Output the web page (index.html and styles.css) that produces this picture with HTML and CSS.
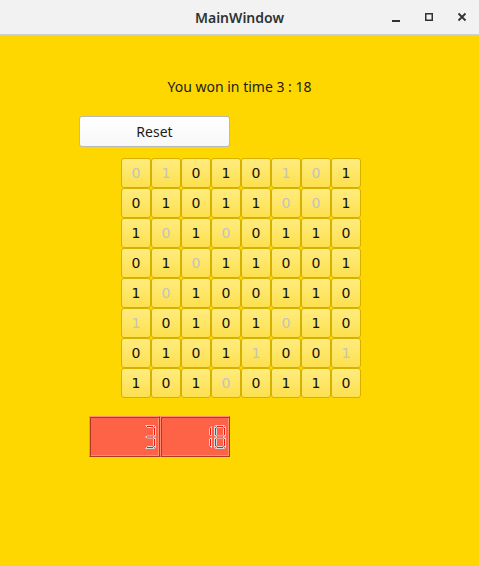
FILE: index.html
```html
<!DOCTYPE html>
<html>
<head>
<meta charset="utf-8">
<link rel="stylesheet" href="styles.css">
</head>
<body>
<div class="window">
  <div class="titlebar">
    <span class="title">MainWindow</span>
    <div class="controls">
      <svg class="ctl" width="16" height="16" viewBox="0 0 16 16"><rect x="4" y="11" width="8" height="2" fill="#2e3436"/></svg>
      <svg class="ctl" width="16" height="16" viewBox="0 0 16 16"><rect x="4.75" y="4.75" width="6.5" height="6.5" fill="none" stroke="#2e3436" stroke-width="1.5"/></svg>
      <svg class="ctl" width="16" height="16" viewBox="0 0 16 16"><path d="M4.5 4.5 L11.5 11.5 M11.5 4.5 L4.5 11.5" stroke="#2e3436" stroke-width="1.8" fill="none"/></svg>
    </div>
  </div>
  <div class="content">
    <div class="msg">You won in time 3 : 18</div>
    <button class="reset">Reset</button>
    <div class="grid">
      <div class="cell off">0</div><div class="cell off">1</div><div class="cell">0</div><div class="cell">1</div><div class="cell">0</div><div class="cell off">1</div><div class="cell off">0</div><div class="cell">1</div>
      <div class="cell">0</div><div class="cell">1</div><div class="cell">0</div><div class="cell">1</div><div class="cell">1</div><div class="cell off">0</div><div class="cell off">0</div><div class="cell">1</div>
      <div class="cell">1</div><div class="cell off">0</div><div class="cell">1</div><div class="cell off">0</div><div class="cell">0</div><div class="cell">1</div><div class="cell">1</div><div class="cell">0</div>
      <div class="cell">0</div><div class="cell">1</div><div class="cell off">0</div><div class="cell">1</div><div class="cell">1</div><div class="cell">0</div><div class="cell">0</div><div class="cell">1</div>
      <div class="cell">1</div><div class="cell off">0</div><div class="cell">1</div><div class="cell">0</div><div class="cell">0</div><div class="cell">1</div><div class="cell">1</div><div class="cell">0</div>
      <div class="cell off">1</div><div class="cell">0</div><div class="cell">1</div><div class="cell">0</div><div class="cell">1</div><div class="cell off">0</div><div class="cell">1</div><div class="cell">0</div>
      <div class="cell">0</div><div class="cell">1</div><div class="cell">0</div><div class="cell">1</div><div class="cell off">1</div><div class="cell">0</div><div class="cell">0</div><div class="cell off">1</div>
      <div class="cell">1</div><div class="cell">0</div><div class="cell">1</div><div class="cell off">0</div><div class="cell">0</div><div class="cell">1</div><div class="cell">1</div><div class="cell">0</div>
    </div>
    <div class="lcds">
      <div class="lcd lcd1">
        <svg width="12" height="24" viewBox="0 0 12 24" class="seg">
          <polygon points="1.5,0.5 10.5,0.5 8.5,2.5 3.5,2.5"/>
          <polygon points="11.5,1.5 11.5,11 9.5,10 9.5,3.5"/>
          <polygon points="1.5,12 3.5,11 8.5,11 10.5,12 8.5,13 3.5,13"/>
          <polygon points="11.5,13 11.5,22.5 9.5,20.5 9.5,14"/>
          <polygon points="3.5,21.5 8.5,21.5 10.5,23.5 1.5,23.5"/>
        </svg>
      </div>
      <div class="lcd lcd2">
        <svg width="26" height="24" viewBox="0 0 26 24" class="seg">
          <polygon points="11.5,1.5 11.5,11 9.5,10 9.5,3.5"/>
          <polygon points="11.5,13 11.5,22.5 9.5,20.5 9.5,14"/>
          <g transform="translate(14 0)">
            <polygon points="1.5,0.5 10.5,0.5 8.5,2.5 3.5,2.5"/>
            <polygon points="0.5,1.5 2.5,3.5 2.5,10 0.5,11"/>
            <polygon points="11.5,1.5 11.5,11 9.5,10 9.5,3.5"/>
            <polygon points="1.5,12 3.5,11 8.5,11 10.5,12 8.5,13 3.5,13"/>
            <polygon points="0.5,13 2.5,14 2.5,20.5 0.5,22.5"/>
            <polygon points="11.5,13 11.5,22.5 9.5,20.5 9.5,14"/>
            <polygon points="3.5,21.5 8.5,21.5 10.5,23.5 1.5,23.5"/>
          </g>
        </svg>
      </div>
    </div>
  </div>
</div>
</body>
</html>
```
FILE: styles.css
```css
html, body {
  margin: 0;
  padding: 0;
}
body {
  width: 479px;
  height: 566px;
  overflow: hidden;
  font-family: "Noto Sans", "DejaVu Sans", sans-serif;
}
.window {
  width: 479px;
  height: 566px;
  background: #ffd700;
  display: flex;
  flex-direction: column;
}
.titlebar {
  height: 34px;
  background: #f2f2f2;
  border-bottom: 1px solid #cfcfcf;
  position: relative;
  display: flex;
  align-items: center;
  justify-content: center;
  flex-shrink: 0;
}
.title {
  font-size: 14px;
  font-weight: 600;
  color: #2e3436;
}
.controls {
  position: absolute;
  right: 9px;
  top: 9px;
  display: flex;
  gap: 17px;
}
.ctl {
  display: block;
}
.content {
  display: flex;
  flex-direction: column;
  align-items: flex-start;
}
.msg {
  align-self: stretch;
  text-align: center;
  margin-top: 42px;
  height: 20px;
  line-height: 20px;
  font-size: 14px;
  color: #1c1c1c;
}
.reset {
  margin-top: 19px;
  margin-left: 79px;
  width: 151px;
  height: 31px;
  border: 1px solid #b9b9b9;
  border-radius: 3px;
  background: linear-gradient(#ffffff, #f7f7f7);
  font-family: "Noto Sans", "DejaVu Sans", sans-serif;
  font-size: 14px;
  color: #1c1c1c;
  padding: 0;
}
.grid {
  margin-top: 11px;
  margin-left: 121px;
  display: grid;
  grid-template-columns: repeat(8, 30px);
  grid-auto-rows: 30px;
}
.cell {
  box-sizing: border-box;
  border: 1px solid #d6b100;
  border-radius: 3px;
  background: linear-gradient(#ffec7e, #fde04f);
  display: flex;
  align-items: center;
  justify-content: center;
  font-family: "DejaVu Sans", sans-serif;
  font-size: 14px;
  color: #111;
}
.cell.off {
  color: #c3c3c3;
}
.lcds {
  margin-top: 18px;
  margin-left: 89px;
  display: flex;
}
.lcd {
  box-sizing: border-box;
  height: 41px;
  background: #ff6347;
  border: 1px solid;
  border-color: #ff8d74 #b13a24 #b13a24 #ff8d74;
  box-shadow: inset 1px 1px 0 #b13a24, inset -1px -1px 0 #ff8d74;
  display: flex;
  align-items: center;
  justify-content: flex-end;
}
.lcd1 {
  width: 71px;
  padding-right: 3px;
}
.lcd2 {
  width: 70px;
  padding-right: 3px;
}
.seg {
  display: block;
}
.seg polygon {
  fill: #f01818;
  stroke: #d8d8d8;
  stroke-width: 1;
}
```
